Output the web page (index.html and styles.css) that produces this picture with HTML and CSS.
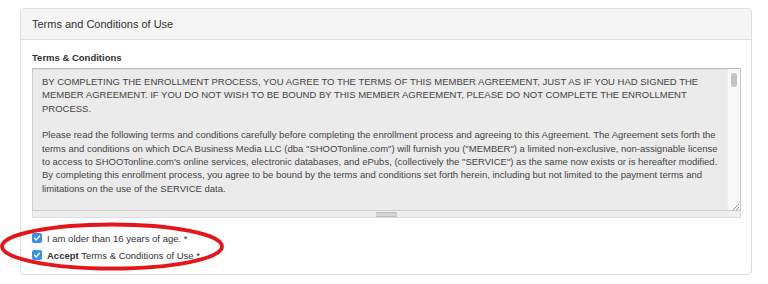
FILE: index.html
```html
<!DOCTYPE html>
<html lang="en">

<head>
    <meta charset="UTF-8">
    <meta name="viewport" content="width=device-width, initial-scale=1.0">
    <title>Terms and Conditions of Use</title>
    <link rel="stylesheet" href="styles.css">
</head>

<body>
    <div class="panel">
        <div class="panelHeading">Terms and Conditions of Use</div>
        <div class="panelBody">
            <div class="fieldLabel">Terms &amp; Conditions</div>
            <div class="termsWrap">
                <div class="termsBox">
                    BY COMPLETING THE ENROLLMENT PROCESS, YOU AGREE TO THE TERMS OF THIS MEMBER AGREEMENT, JUST AS IF YOU HAD SIGNED THE<br>
                    MEMBER AGREEMENT. IF YOU DO NOT WISH TO BE BOUND BY THIS MEMBER AGREEMENT, PLEASE DO NOT COMPLETE THE ENROLLMENT<br>
                    PROCESS.<br>
                    <br>
                    Please read the following terms and conditions carefully before completing the enrollment process and agreeing to this Agreement. The Agreement sets forth the<br>
                    terms and conditions on which DCA Business Media LLC (dba "SHOOTonline.com") will furnish you ("MEMBER") a limited non-exclusive, non-assignable license<br>
                    to access to SHOOTonline.com's online services, electronic databases, and ePubs, (collectively the "SERVICE") as the same now exists or is hereafter modified.<br>
                    By completing this enrollment process, you agree to be bound by the terms and conditions set forth herein, including but not limited to the payment terms and<br>
                    limitations on the use of the SERVICE data.<br>
                    <br>
                    1. Grant of License
                </div>
                <div class="scrollTrack"><span class="scrollThumb"></span></div>
                <svg class="resizeGrip" width="7" height="7" viewBox="0 0 7 7">
                    <path d="M1 7 L7 1 M4 7 L7 4" stroke="#999" stroke-width="1" fill="none" />
                </svg>
                <div class="grippie"><span class="grip"></span></div>
            </div>
            <div class="checks">
                <label class="check">
                    <span class="checkBox">
                        <svg width="10" height="10" viewBox="0 0 10 10"><path d="M2.6 5.2 L4.3 6.9 L7.4 3.2" stroke="#fff" stroke-width="1.4" fill="none" stroke-linecap="round" stroke-linejoin="round" /></svg>
                    </span>
                    I am older than 16 years of age. *
                </label>
                <label class="check">
                    <span class="checkBox">
                        <svg width="10" height="10" viewBox="0 0 10 10"><path d="M2.6 5.2 L4.3 6.9 L7.4 3.2" stroke="#fff" stroke-width="1.4" fill="none" stroke-linecap="round" stroke-linejoin="round" /></svg>
                    </span>
                    <span><b>Accept</b> Terms &amp; Conditions of Use *</span>
                </label>
            </div>
        </div>
    </div>

    <!-- red hand-drawn highlight over the checkboxes -->
    <svg class="highlight" width="232" height="56" viewBox="0 0 232 56">
        <ellipse cx="112" cy="26.5" rx="110" ry="22" fill="none" stroke="#e3171b" stroke-width="3.8" />
    </svg>
</body>

</html>
```

FILE: styles.css
```css
body {
    margin: 0;
    background-color: #fff;
    font-family: 'Liberation Sans', Arial, sans-serif;
    color: #333;
}

.panel {
    margin: 8px 16px 0 20px;
    border: 1px solid #ddd;
    border-radius: 4px;
    background-color: #fff;
}

.panelHeading {
    height: 30px;
    line-height: 31px;
    padding: 0 11px;
    font-size: 11px;
    background-color: #f5f5f5;
    border-bottom: 1px solid #ddd;
    border-radius: 4px 4px 0 0;
}

.panelBody {
    padding: 11px 10px 10px 11px;
}

.fieldLabel {
    font-size: 9.5px;
    font-weight: bold;
    line-height: 13px;
    margin-bottom: 4px;
}

.termsWrap {
    position: relative;
}

.termsBox {
    height: 130px;
    overflow: hidden;
    padding: 6px 12px 5px 9px;
    background-color: #ebebeb;
    border: 1px solid #ccc;
    border-top-color: #bbb;
    box-shadow: inset 0 1px 1px rgba(0, 0, 0, 0.06);
    font-size: 9.5px;
    line-height: 13.35px;
    color: #444;
    white-space: nowrap;
}

.scrollTrack {
    position: absolute;
    top: 1px;
    right: 1px;
    width: 12px;
    height: 141px;
    background-color: #f8f8f8;
    border-left: 1px solid #eee;
}

.scrollThumb {
    display: block;
    width: 6px;
    height: 14px;
    margin: 4px 0 0 3px;
    border-radius: 3px;
    background-color: #c2c2c2;
}

.resizeGrip {
    position: absolute;
    right: 2px;
    top: 135px;
}

.grippie {
    height: 6px;
    display: flex;
    justify-content: center;
    align-items: center;
    background-color: #eee;
    border: 1px solid #ddd;
    border-top: none;
}

.grip {
    width: 21px;
    height: 3px;
    border-top: 1px solid #bbb;
    border-bottom: 1px solid #bbb;
    background-color: #d4d4d4;
}

.checks {
    padding-top: 11.5px;
}

.check {
    display: flex;
    align-items: center;
    gap: 5px;
    height: 17px;
    font-size: 9.5px;
    color: #333;
}

.checkBox {
    width: 10px;
    height: 10px;
    border-radius: 2px;
    background-color: #3b8fe8;
    display: flex;
}

.highlight {
    position: absolute;
    left: 0;
    top: 220px;
}
```
